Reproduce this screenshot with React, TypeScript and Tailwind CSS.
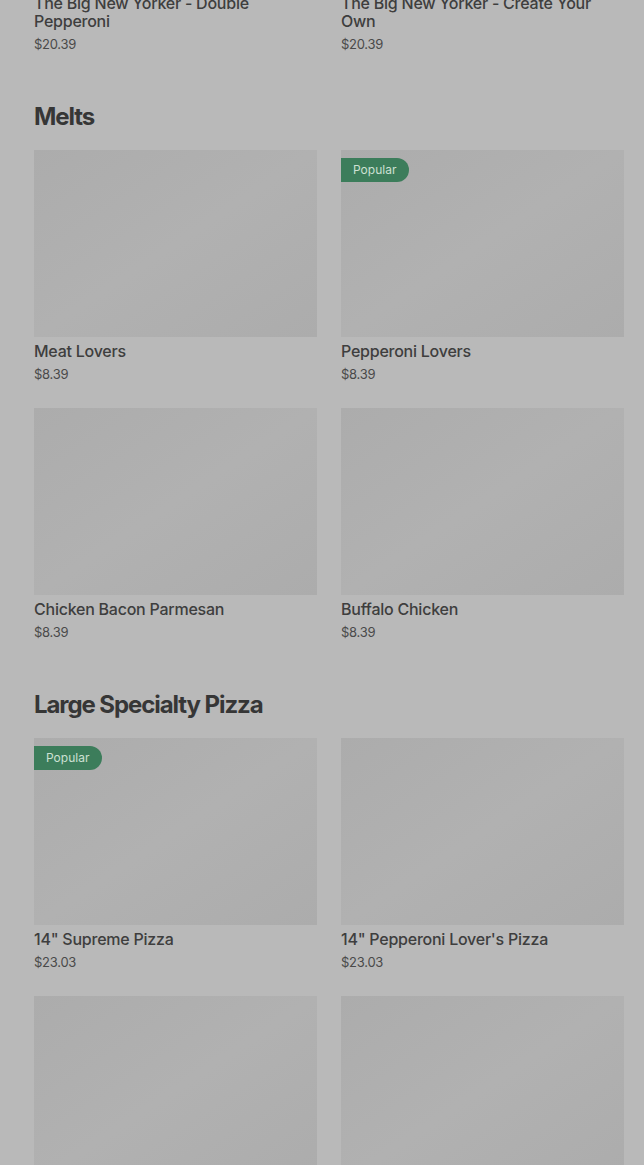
type Item = { name: string; price: string; popular?: boolean };

const scrolledItems: Item[] = [
  { name: "The Big New Yorker - Double Pepperoni", price: "$20.39" },
  { name: "The Big New Yorker - Create Your Own", price: "$20.39" },
];

const sections: { title: string; items: Item[] }[] = [
  {
    title: "Melts",
    items: [
      { name: "Meat Lovers", price: "$8.39" },
      { name: "Pepperoni Lovers", price: "$8.39", popular: true },
      { name: "Chicken Bacon Parmesan", price: "$8.39" },
      { name: "Buffalo Chicken", price: "$8.39" },
    ],
  },
  {
    title: "Large Specialty Pizza",
    items: [
      { name: "14\" Supreme Pizza", price: "$23.03", popular: true },
      { name: "14\" Pepperoni Lover's Pizza", price: "$23.03" },
      { name: "14\" Meat Lover's Pizza", price: "$23.03" },
      { name: "14\" Chicken Bacon Ranch Pizza", price: "$23.03" },
    ],
  },
];

function MenuCard({ item }: { item: Item }) {
  return (
    <div className="flex flex-col pb-[1px]">
      <div className="relative h-[187px] w-full bg-[#adadad] bg-linear-to-br from-[#acacac] via-[#b1b1b1] to-[#acacac]">
        {item.popular ? (
          <span className="absolute left-0 top-2 flex h-6 items-center rounded-l-[3px] rounded-r-full bg-[#3c7d5b] pl-3 pr-[13px] text-xs text-[#cde0d3]">
            Popular
          </span>
        ) : null}
      </div>
      <p className="mt-[5px] text-base font-medium leading-[18px] tracking-[-0.015em] text-[#3e3e3e]">
        {item.name}
      </p>
      <p className="mt-[5px] text-[13px] leading-[18px] tracking-[-0.02em] text-[#4a4a4a]">
        {item.price}
      </p>
    </div>
  );
}

export default function App() {
  return (
    <div
      className="h-screen overflow-hidden bg-[#b9b9b9] pl-[34px] pr-[20px]"
      style={{ fontFamily: "Inter, 'Liberation Sans', sans-serif" }}
    >
      <div className="-mt-[198px] grid grid-cols-2 gap-6">
        {scrolledItems.map((item) => (
          <MenuCard key={item.name} item={item} />
        ))}
      </div>

      {sections.map((section) => (
        <section key={section.title} className="mt-[47px]">
          <h2 className="mb-[17px] text-[24px] font-bold leading-8 tracking-[-0.045em] text-[#363636]">
            {section.title}
          </h2>
          <div className="grid grid-cols-2 gap-6">
            {section.items.map((item) => (
              <MenuCard key={item.name} item={item} />
            ))}
          </div>
        </section>
      ))}
    </div>
  );
}
